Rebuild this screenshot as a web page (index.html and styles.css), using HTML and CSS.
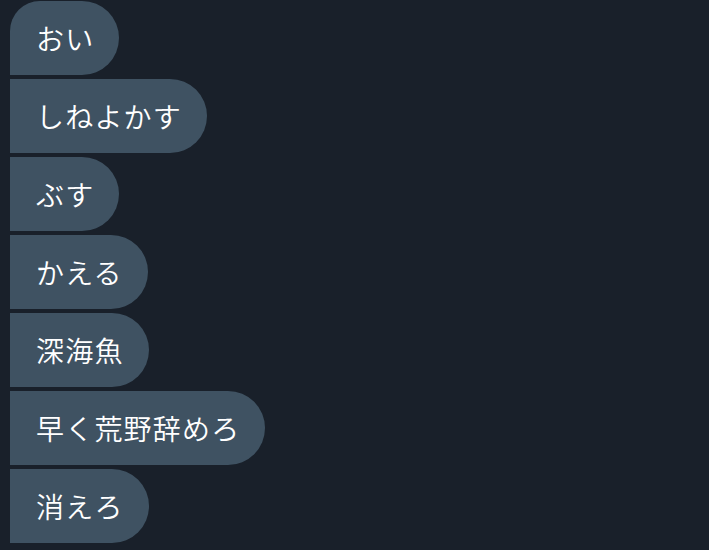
FILE: index.html
```html
<!DOCTYPE html>
<html lang="ja">
<head>
<meta charset="utf-8">
<link rel="stylesheet" href="styles.css">
</head>
<body>
<div class="thread">
  <div class="bubble first">おい</div>
  <div class="bubble">しねよかす</div>
  <div class="bubble">ぶす</div>
  <div class="bubble">かえる</div>
  <div class="bubble">深海魚</div>
  <div class="bubble">早く荒野辞めろ</div>
  <div class="bubble">消えろ</div>
</div>
</body>
</html>
```
FILE: styles.css
```css
html, body {
  margin: 0;
  padding: 0;
  background: #19202a;
  height: 100%;
  overflow: hidden;
}
.thread {
  display: flex;
  flex-direction: column;
  align-items: flex-start;
  gap: 4px;
  padding: 1px 0 0 10px;
}
.bubble {
  height: 74px;
  display: flex;
  align-items: center;
  padding: 0 25px 0 26px;
  background: #3f5262;
  color: #ffffff;
  font-family: "Noto Sans CJK JP", sans-serif;
  font-size: 28px;
  font-weight: 350;
  letter-spacing: 1.2px;
  border-radius: 0 37px 37px 0;
  box-sizing: border-box;
}
.bubble.first {
  border-top-left-radius: 30px;
}
```
